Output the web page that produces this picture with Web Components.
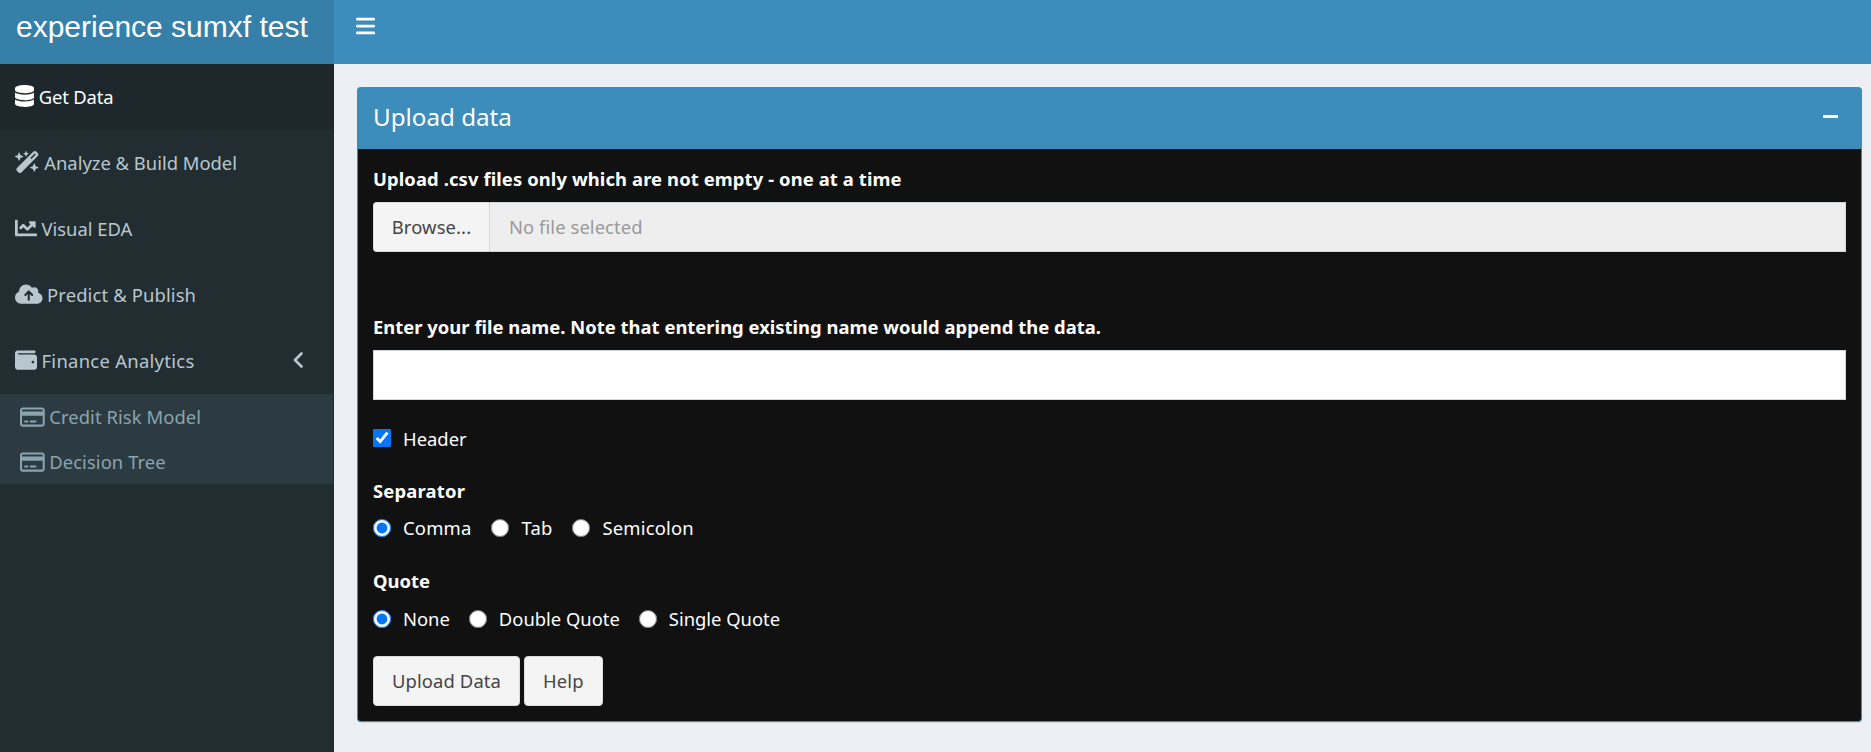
<!DOCTYPE html>
<html lang="en">
<head>
<meta charset="utf-8">
<title>experience sumxf test</title>
<style>
html,body{margin:0;height:100%;overflow:hidden;background:#ecf0f5;font-family:"Noto Sans","Open Sans",sans-serif;font-size:18.4px}
</style>
</head>
<body>
<dash-app>
  <dash-header slot="header" brand="experience sumxf test"></dash-header>
  <dash-sidebar slot="sidebar">
    <side-item icon="database" active style="letter-spacing:-.15px">Get Data</side-item>
    <side-item icon="wand">Analyze &amp; Build Model</side-item>
    <side-item icon="chart">Visual EDA</side-item>
    <side-item icon="cloud" style="letter-spacing:.14px">Predict &amp; Publish</side-item>
    <side-item icon="wallet" chevron style="letter-spacing:.3px">Finance Analytics</side-item>
    <side-sub>
      <sub-item>Credit Risk Model</sub-item>
      <sub-item>Decision Tree</sub-item>
    </side-sub>
  </dash-sidebar>
  <dash-box heading="Upload data">
    <field-label style="letter-spacing:.11px">Upload .csv files only which are not empty - one at a time</field-label>
    <file-input style="margin-top:9px"></file-input>
    <field-label style="margin-top:61px;letter-spacing:.02px">Enter your file name. Note that entering existing name would append the data.</field-label>
    <text-input style="margin-top:9px"></text-input>
    <check-row style="margin-top:24px">Header</check-row>
    <field-label style="margin-top:25px;letter-spacing:.2px">Separator</field-label>
    <radio-row style="margin-top:9px;letter-spacing:.2px" name="sep" options="Comma,Tab,Semicolon"></radio-row>
    <field-label style="margin-top:25px">Quote</field-label>
    <radio-row style="margin-top:10px;gap:19px" name="quote" options="None,Double Quote,Single Quote"></radio-row>
    <div style="display:flex;gap:4px;margin-top:23px">
      <push-btn>Upload Data</push-btn>
      <push-btn>Help</push-btn>
    </div>
  </dash-box>
</dash-app>
<script>
const ICONS={
 database:[448,'M448 73.143v45.714C448 159.143 347.667 192 224 192S0 159.143 0 118.857V73.143C0 32.857 100.333 0 224 0s224 32.857 224 73.143zM448 176v102.857C448 319.143 347.667 352 224 352S0 319.143 0 278.857V176c48.125 33.143 136.208 48.572 224 48.572S399.874 209.143 448 176zm0 160v102.857C448 479.143 347.667 512 224 512S0 479.143 0 438.857V336c48.125 33.143 136.208 48.572 224 48.572S399.874 369.143 448 336z'],
 wand:[576,'M234.7 42.7L197 56.8c-3 1.1-5 4-5 7.2s2 6.1 5 7.2l37.7 14.1L248.8 123c1.1 3 4 5 7.2 5s6.1-2 7.2-5l14.1-37.7L315 71.2c3-1.1 5-4 5-7.2s-2-6.1-5-7.2L277.3 42.7 263.2 5c-1.1-3-4-5-7.2-5s-6.1 2-7.2 5L234.7 42.7zM46.1 395.4c-18.7 18.7-18.7 49.1 0 67.9l34.6 34.6c18.7 18.7 49.1 18.7 67.9 0L529.9 116.5c18.7-18.7 18.7-49.1 0-67.9L495.3 14.1c-18.7-18.7-49.1-18.7-67.9 0L46.1 395.4zM484.6 82.6l-105 105-23.3-23.3 105-105 23.3 23.3zM7.5 117.2C3 118.9 0 123.2 0 128s3 9.1 7.5 10.8L64 160l21.2 56.5c1.7 4.5 6 7.5 10.8 7.5s9.1-3 10.8-7.5L128 160l56.5-21.2c4.5-1.7 7.5-6 7.5-10.8s-3-9.1-7.5-10.8L128 96 106.8 39.5C105.1 35 100.8 32 96 32s-9.1 3-10.8 7.5L64 96 7.5 117.2zm352 256c-4.5 1.7-7.5 6-7.5 10.8s3 9.1 7.5 10.8L416 416l21.2 56.5c1.7 4.5 6 7.5 10.8 7.5s9.1-3 10.8-7.5L480 416l56.5-21.2c4.5-1.7 7.5-6 7.5-10.8s-3-9.1-7.5-10.8L480 352l-21.2-56.5c-1.7-4.5-6-7.5-10.8-7.5s-9.1 3-10.8 7.5L416 352l-56.5 21.2z'],
 chart:[512,'M496 384H64V80c0-8.84-7.16-16-16-16H16C7.16 64 0 71.16 0 80v336c0 17.67 14.33 32 32 32h464c8.84 0 16-7.16 16-16v-32c0-8.84-7.16-16-16-16zM464 96H345.94c-21.38 0-32.09 25.85-16.97 40.97l32.4 32.4L288 242.75l-73.37-73.37c-12.5-12.5-32.76-12.5-45.25 0l-68.69 68.69c-6.25 6.25-6.25 16.38 0 22.63l22.62 22.62c6.25 6.25 16.38 6.25 22.63 0L192 237.25l73.37 73.37c12.5 12.5 32.76 12.5 45.25 0l96-96 32.4 32.4c15.12 15.12 40.97 4.41 40.97-16.97V112c0-8.84-7.16-16-16-16z'],
 cloud:[640,'M144 480C64.5 480 0 415.5 0 336c0-62.8 40.2-116.2 96.2-135.9c-.1-2.7-.2-5.4-.2-8.1c0-88.4 71.6-160 160-160c59.3 0 111 32.2 138.7 80.2C409.9 102 428.3 96 448 96c53 0 96 43 96 96c0 12.2-2.3 23.8-6.4 34.6C596 238.4 640 290.1 640 352c0 70.7-57.3 128-128 128H144zm79-217c-9.4 9.4-9.4 24.6 0 33.9s24.6 9.4 33.9 0l39-39V392c0 13.3 10.7 24 24 24s24-10.7 24-24V257.9l39 39c9.4 9.4 24.6 9.4 33.9 0s9.4-24.6 0-33.9l-80-80c-9.4-9.4-24.6-9.4-33.9 0l-80 80z'],
 wallet:[512,'M64 32C28.7 32 0 60.7 0 96V416c0 35.3 28.7 64 64 64H448c35.3 0 64-28.7 64-64V192c0-35.3-28.7-64-64-64H80c-8.8 0-16-7.2-16-16s7.2-16 16-16H448c17.7 0 32-14.3 32-32s-14.3-32-32-32H64zM416 272a32 32 0 1 1 0 64 32 32 0 1 1 0-64z'],
 card:[576,'M512 80c8.8 0 16 7.2 16 16v32H48V96c0-8.8 7.2-16 16-16H512zm16 144V416c0 8.8-7.2 16-16 16H64c-8.8 0-16-7.2-16-16V224H528zM64 32C28.7 32 0 60.7 0 96V416c0 35.3 28.7 64 64 64H512c35.3 0 64-28.7 64-64V96c0-35.3-28.7-64-64-64H64zm56 304c-13.3 0-24 10.7-24 24s10.7 24 24 24h48c13.3 0 24-10.7 24-24s-10.7-24-24-24H120zm128 0c-13.3 0-24 10.7-24 24s10.7 24 24 24H360c13.3 0 24-10.7 24-24s-10.7-24-24-24H248z'],
 bars:[448,'M0 96C0 78.3 14.3 64 32 64H416c17.7 0 32 14.3 32 32s-14.3 32-32 32H32C14.3 128 0 113.7 0 96zM0 256c0-17.7 14.3-32 32-32H416c17.7 0 32 14.3 32 32s-14.3 32-32 32H32c-17.7 0-32-14.3-32-32zM448 416c0 17.7-14.3 32-32 32H32c-17.7 0-32-14.3-32-32s14.3-32 32-32H416c17.7 0 32 14.3 32 32z']
};
const svg=(n,h)=>{const[w,d]=ICONS[n];return `<svg part="icon" xmlns="http://www.w3.org/2000/svg" viewBox="0 0 ${w} 512" height="${h}" width="${h*w/512}" fill="currentColor" style="display:block;flex:none" aria-hidden="true"><path d="${d}"/></svg>`};
class Base extends HTMLElement{
  constructor(){super();this.attachShadow({mode:'open'})}
  connectedCallback(){this.shadowRoot.innerHTML=this.render()}
}
const def=(n,f)=>customElements.define(n,class extends Base{render(){return f(this)}});

def('dash-app',()=>`<style>
:host{display:flex;flex-direction:column;height:752px;overflow:hidden}
.row{display:flex;flex:1;min-height:0}
main{flex:1;min-width:0;padding:23px 9px 0 23px}
</style>
<slot name="header"></slot>
<div class="row"><slot name="sidebar"></slot><main><slot></slot></main></div>`);

def('dash-header',h=>`<style>
:host{display:flex;height:64px;background:#3c8dbc;color:#fff;flex:none}
.brand{width:318px;padding-left:16px;background:#367fa9;font:30px/54px "Liberation Sans",Arial,sans-serif;white-space:nowrap;height:64px}
.tog{display:flex;align-items:center;padding-left:22px;height:52px}
</style>
<div class="brand">${h.getAttribute('brand')}</div>
<div class="tog" role="button" aria-label="Toggle navigation">${svg('bars',22)}</div>`);

def('dash-sidebar',()=>`<style>
:host{display:block;width:334px;flex:none;background:#222d32}
</style><slot></slot>`);

def('side-item',e=>`<style>
:host{display:flex;align-items:center;height:66px;padding:0 0 2px 15px;box-sizing:border-box;color:${e.hasAttribute('active')?'#fff':'#b8c7ce'};background:${e.hasAttribute('active')?'#1e282c':'transparent'}}
.t{margin-left:4.5px;white-space:nowrap}
.c{margin-left:auto;margin-right:31px;display:${e.hasAttribute('chevron')?'block':'none'}}
</style>${svg(e.getAttribute('icon'),22)}<span class="t"><slot></slot></span>
<svg class="c" width="10" height="16" viewBox="0 0 10 16" fill="none" stroke="currentColor" stroke-width="2.6" stroke-linecap="round" stroke-linejoin="round"><path d="M8.5 1.5 2 8l6.5 6.5"/></svg>`);

def('side-sub',()=>`<style>
:host{display:block;background:#2c3b41;height:90px;margin-right:.6px}
</style><slot></slot>`);

def('sub-item',()=>`<style>
:host{display:flex;align-items:center;height:45px;padding-left:20px;color:#8aa4af;letter-spacing:.08px}
.t{margin-left:4.5px;white-space:nowrap}
</style>${svg('card',22)}<span class="t"><slot></slot></span>`);

def('dash-box',e=>`<style>
:host{display:block;border-radius:4px;box-shadow:0 1px 1px rgba(0,0,0,.1);overflow:hidden;background:#3c8dbc;box-sizing:border-box;border:1px solid #3c8dbc;border-top:0}
header{height:62px;display:flex;align-items:center;justify-content:space-between;padding:0 23px 1px 15px;color:#fff;box-sizing:border-box}
h3{margin:0;font-weight:400;font-size:24.2px;line-height:1}
.min{width:15px;height:3px;background:#fff;margin-top:-3px}
.body{background:#111;padding:16px 15px 15px;color:#fff}
</style>
<header><h3>${e.getAttribute('heading')}</h3><span class="min" role="button" aria-label="Collapse"></span></header>
<div class="body"><slot></slot></div>`);

def('field-label',()=>`<style>
:host{display:block;font-weight:700;line-height:28px;color:#fff;white-space:nowrap}
</style><slot></slot>`);

def('file-input',()=>`<style>
:host{display:flex;height:50px}
button{width:117px;box-sizing:border-box;background:#f4f4f4;color:#444;border:1px solid #ddd;border-right-color:#d2d6de;border-radius:4px 0 0 4px;font:inherit;letter-spacing:.12px;padding:0 0 2px}
input{flex:1;min-width:0;box-sizing:border-box;background:#eee;border:1px solid #d2d6de;border-left:0;font:inherit;letter-spacing:.08px;padding:0 19px 2px;outline:0;color:#555;border-radius:0}
input::placeholder{color:#999;opacity:1}
</style><button type="button">Browse...</button><input readonly placeholder="No file selected" aria-label="File">`);

def('text-input',()=>`<style>
:host{display:block;height:50px}
input{display:block;width:100%;height:100%;box-sizing:border-box;background:#fff;border:1px solid #d2d6de;outline:0;border-radius:0;font:inherit;padding:0 16px}
</style><input type="text" aria-label="File name">`);

def('check-row',()=>`<style>
:host{display:flex;align-items:center;height:28px;color:#fff}
input{width:18px;height:18px;margin:0 12px 0 0}
</style><input type="checkbox" checked aria-label="Header"><span><slot></slot></span>`);

def('radio-row',e=>`<style>
:host{display:flex;align-items:center;gap:20px;height:28px;color:#fff}
label{display:flex;align-items:center;white-space:nowrap}
input{width:18px;height:18px;margin:0 12px 0 0}
span{margin-bottom:2px}
</style>${e.getAttribute('options').split(',').map((o,i)=>`<label><input type="radio" name="${e.getAttribute('name')}" ${i?'':'checked'}><span>${o}</span></label>`).join('')}`);

def('push-btn',()=>`<style>
:host{display:inline-block}
button{height:50px;padding:0 18px 2px;box-sizing:border-box;background:#f4f4f4;color:#444;border:1px solid #ddd;border-radius:4px;font:inherit;letter-spacing:.12px;white-space:nowrap}
</style><button type="button"><slot></slot></button>`);
</script>
</body>
</html>
